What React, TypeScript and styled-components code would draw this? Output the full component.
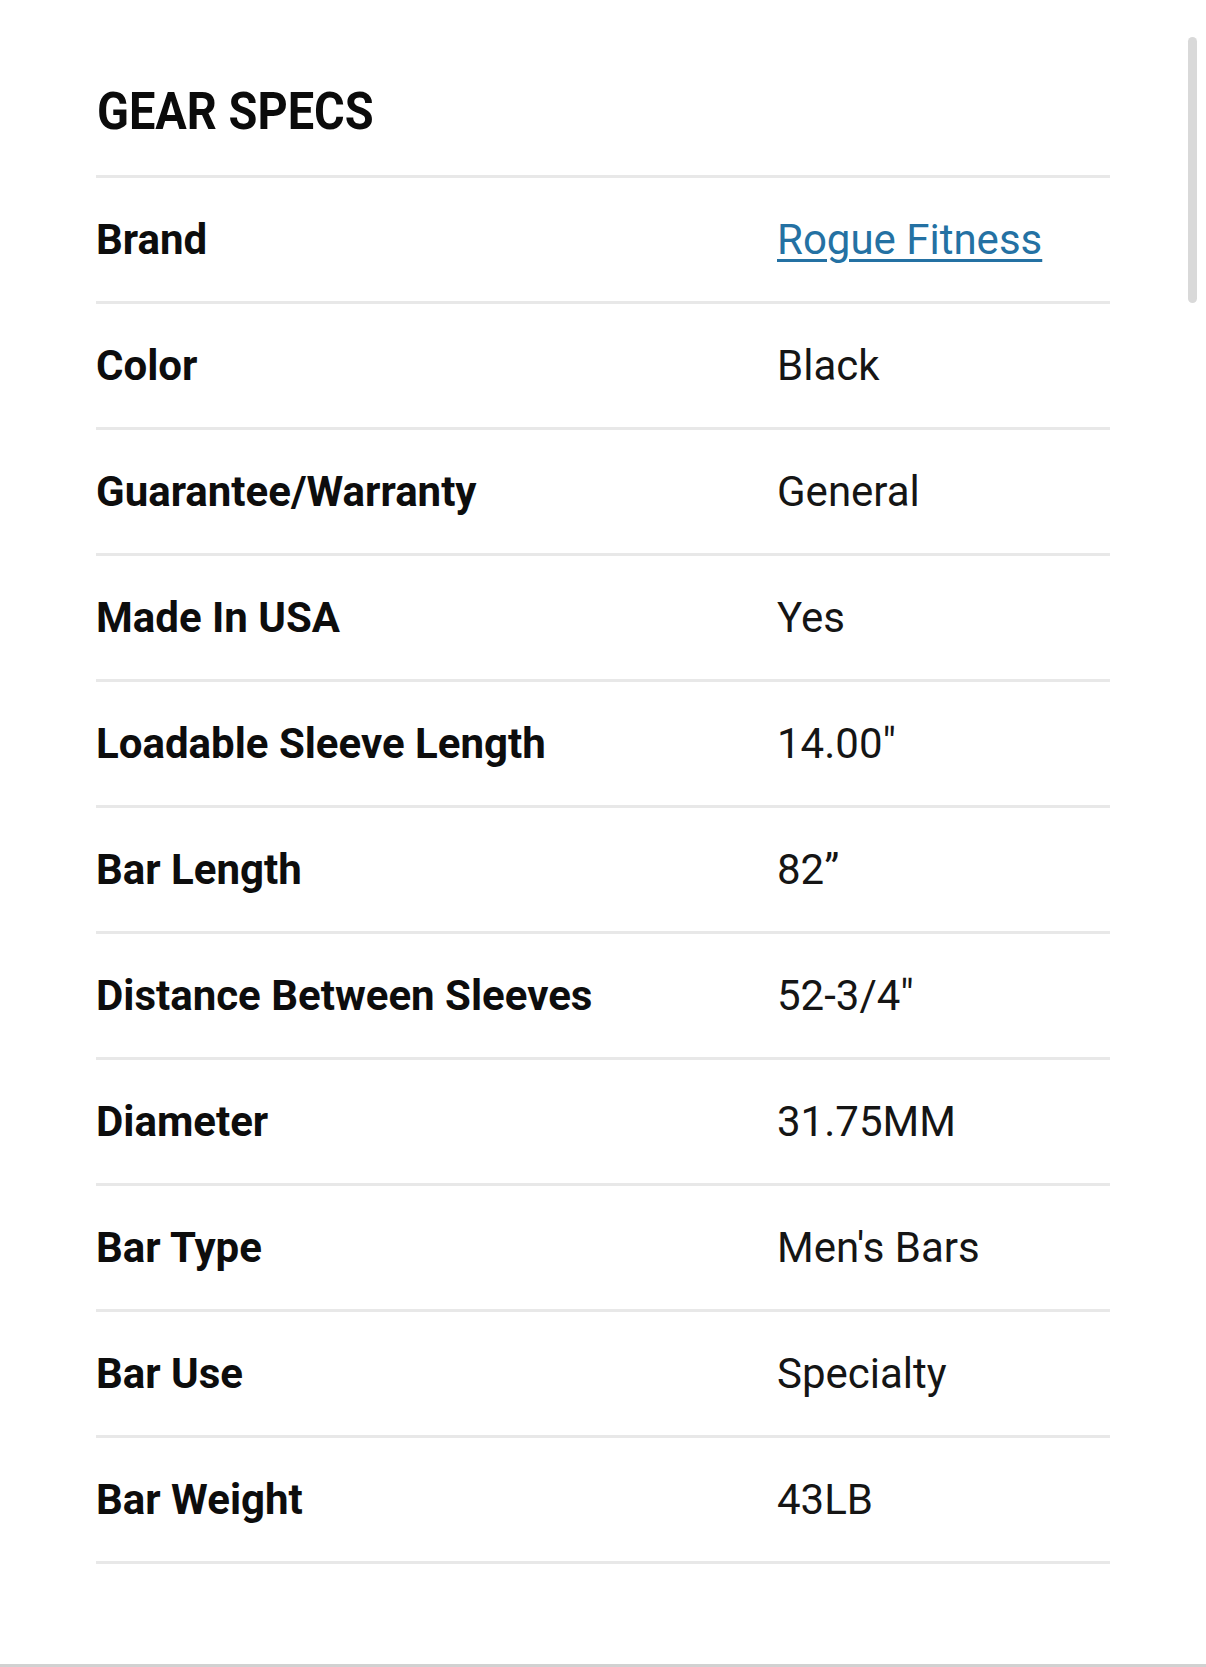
import styled, { createGlobalStyle } from 'styled-components'

const GlobalStyle = createGlobalStyle`
    html, body {
        margin: 0;
        padding: 0;
        background: #ffffff;
    }

    body {
        font-family: Roboto, 'Liberation Sans', Arial, sans-serif;
        color: #111111;
    }
`

const Page = styled.main`
    position: relative;
    box-sizing: border-box;
    height: 1667px;
    padding: 82px 96px 0 96px;
    border-bottom: 3px solid #d1d1d1;
    overflow: hidden;
`

const ScrollThumb = styled.div`
    position: absolute;
    top: 37px;
    right: 9px;
    width: 9px;
    height: 266px;
    border-radius: 5px;
    background-color: #d9d9d9;
`

const SpecsSection = styled.section`
    width: 1014px;

    & h2 {
        margin: 0 0 33px 0;
        padding-left: 1px;
        font-size: 51px;
        line-height: 60px;
        font-weight: 700;
        color: #0b0b0b;
        transform: scaleX(0.92);
        transform-origin: left center;
        white-space: nowrap;
    }
`

const SpecList = styled.dl`
    margin: 0;
    border-bottom: 3px solid #e8e8e8;
`

const SpecRow = styled.div`
    display: grid;
    grid-template-columns: 681px 1fr;
    align-items: center;
    height: 123px;
    border-top: 3px solid #e8e8e8;

    & dt {
        font-size: 42px;
        font-weight: 700;
        color: #0d0d0d;
    }

    & dd {
        margin: 0;
        font-size: 42px;
        font-weight: 400;
        color: #151515;
    }

    & a {
        color: #2471a3;
        text-decoration: underline;
        text-decoration-thickness: 3px;
        text-underline-offset: 5px;
    }
`

interface Spec {
    label: string
    value: string
    link?: boolean
}

const specs: Spec[] = [
    { label: 'Brand', value: 'Rogue Fitness', link: true },
    { label: 'Color', value: 'Black' },
    { label: 'Guarantee/Warranty', value: 'General' },
    { label: 'Made In USA', value: 'Yes' },
    { label: 'Loadable Sleeve Length', value: '14.00"' },
    { label: 'Bar Length', value: '82\u201D' },
    { label: 'Distance Between Sleeves', value: '52-3/4"' },
    { label: 'Diameter', value: '31.75MM' },
    { label: 'Bar Type', value: "Men's Bars" },
    { label: 'Bar Use', value: 'Specialty' },
    { label: 'Bar Weight', value: '43LB' },
]

export default function App() {
    return (
        <>
            <GlobalStyle />
            <Page>
                <SpecsSection>
                    <h2>GEAR SPECS</h2>

                    <SpecList>
                        {specs.map((spec) => (
                            <SpecRow key={spec.label}>
                                <dt>{spec.label}</dt>
                                <dd>
                                    {spec.link ? (
                                        <a href="#">{spec.value}</a>
                                    ) : (
                                        spec.value
                                    )}
                                </dd>
                            </SpecRow>
                        ))}
                    </SpecList>
                </SpecsSection>

                <ScrollThumb />
            </Page>
        </>
    )
}
